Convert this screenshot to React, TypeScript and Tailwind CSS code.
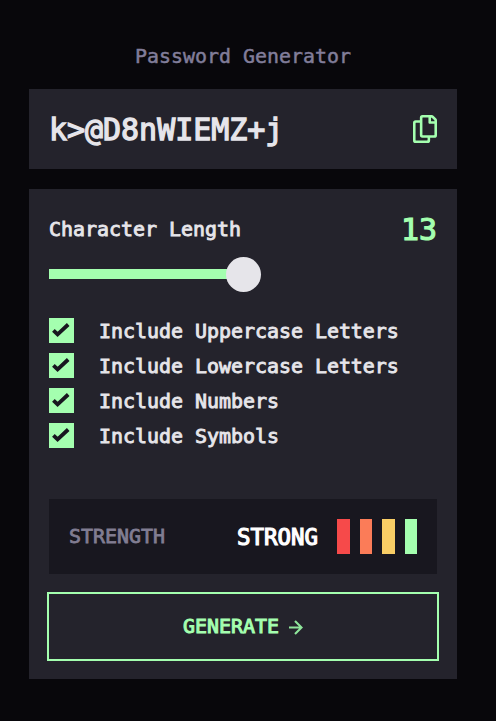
const OPTIONS = [
  'Include Uppercase Letters',
  'Include Lowercase Letters',
  'Include Numbers',
  'Include Symbols',
];

const BARS = ['bg-[#f64a4a]', 'bg-[#fb7c58]', 'bg-[#f8cd65]', 'bg-[#a4ffaf]'];

function CopyIcon() {
  return (
    <svg className="h-7 w-6" viewBox="0 0 21 24" preserveAspectRatio="none" fill="#a4ffaf">
      <path d="M20.341 3.091 17.909.659A2.25 2.25 0 0 0 16.319 0H8.25A2.25 2.25 0 0 0 6 2.25V4.5H2.25A2.25 2.25 0 0 0 0 6.75v15A2.25 2.25 0 0 0 2.25 24h10.5A2.25 2.25 0 0 0 15 21.75V19.5h3.75A2.25 2.25 0 0 0 21 17.25V4.682a2.25 2.25 0 0 0-.659-1.591ZM12.469 21.75H2.53a.281.281 0 0 1-.281-.281V7.03a.281.281 0 0 1 .281-.281H6v10.5a2.25 2.25 0 0 0 2.25 2.25h4.5v1.969a.282.282 0 0 1-.281.281Zm6-4.5H8.53a.281.281 0 0 1-.281-.281V2.53a.281.281 0 0 1 .281-.281H13.5v4.125c0 .621.504 1.125 1.125 1.125h4.125v9.469a.282.282 0 0 1-.281.281Zm.281-12h-3v-3h.451c.075 0 .147.03.2.082L18.667 4.6a.283.283 0 0 1 .083.199v.451Z" />
    </svg>
  );
}

export default function App() {
  return (
    <main className="flex h-[721px] w-full flex-col bg-[#08070b] pr-[39px] pl-[29px] font-['DejaVu_Sans_Mono',monospace] text-[#e6e5ea]">
      <h1 className="mt-11 text-center text-[19.93px] leading-[26px] text-[#817d9a] [-webkit-text-stroke:0.5px]">
        Password Generator
      </h1>
      <section className="mt-[19px] flex h-20 items-center justify-between bg-[#24232c] px-5">
        <span className="pt-0.5 text-[29.95px] leading-10 [-webkit-text-stroke:1.3px]">k&gt;@D8nWIEMZ+j</span>
        <button aria-label="Copy password"><CopyIcon /></button>
      </section>
      <section className="mt-5 flex h-[490px] flex-col bg-[#24232c] px-5 pt-5">
        <div className="flex h-10 items-center justify-between">
          <span className="pt-0.5 text-[19.93px] [-webkit-text-stroke:0.9px]">Character Length</span>
          <span className="pt-0.5 text-[29.9px] leading-10 text-[#a4ffaf] [-webkit-text-stroke:1.2px]">13</span>
        </div>
        <div className="mt-2 flex h-[35px] items-center">
          <div className="mb-px h-2.5 w-[178px] bg-[#a4ffaf]" />
          <div className="-ml-px size-[35px] rounded-full bg-[#e6e5ea]" />
        </div>
        <ul className="mt-[26px] flex flex-col gap-2.5">
          {OPTIONS.map((label) => (
            <li key={label} className="flex h-[25px] items-center gap-[25px]">
              <span className="size-[25px] bg-[#a4ffaf]">
                <svg viewBox="0 0 25 25" fill="none" stroke="#18171f" strokeWidth="3.8">
                  <path d="M4.4 12.3 8.6 16.4 19.2 6.5" />
                </svg>
              </span>
              <span className="pt-0.5 text-[19.93px] leading-[25px] [-webkit-text-stroke:0.9px]">{label}</span>
            </li>
          ))}
        </ul>
        <div className="mt-[51px] flex h-[75px] shrink-0 items-center bg-[#18171f] px-5">
          <span className="text-[19.93px] text-[#817d92] [-webkit-text-stroke:0.8px]">STRENGTH</span>
          <span className="mr-[19px] ml-auto pt-0.5 text-[22.4px] text-white [-webkit-text-stroke:1.2px]">STRONG</span>
          <div className="flex h-[35px] w-20 gap-2.5">
            {BARS.map((color) => (
              <div key={color} className={`flex-1 ${color}`} />
            ))}
          </div>
        </div>
        <button className="mt-5 flex h-[65px] shrink-0 items-center justify-center gap-2.5 text-[19.93px] text-[#a4ffaf] outline-2 outline-[#a4ffaf] [-webkit-text-stroke:1px]">
          GENERATE
          <svg className="mt-px h-[15px] w-3.5" viewBox="0 0 14 15" fill="none" stroke="#8fe69b" strokeWidth="2.1">
            <path d="M0 7.5h13M6 1l6.5 6.5L6 14" />
          </svg>
        </button>
      </section>
    </main>
  );
}
